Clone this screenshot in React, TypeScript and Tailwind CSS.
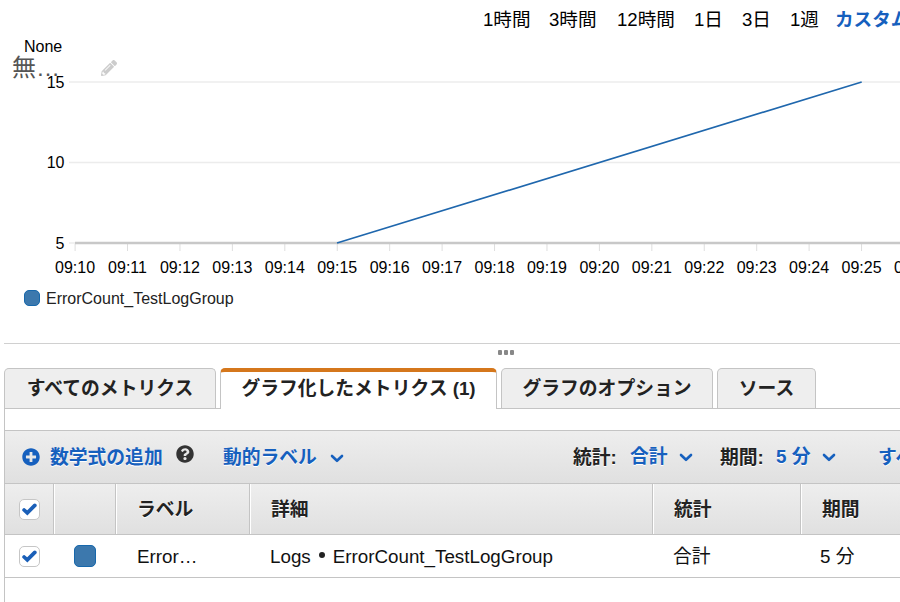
import clsx from "clsx";
import { FaPencilAlt, FaPlusCircle, FaQuestionCircle } from "react-icons/fa";

const ranges = [
  { label: "1時間", width: "w-[66px]" },
  { label: "3時間", width: "w-[68px]" },
  { label: "12時間", width: "w-[77px]" },
  { label: "1日", width: "w-[48px]" },
  { label: "3日", width: "w-[48px]" },
  { label: "1週", width: "w-[45px]" },
];

const tabs = [
  { label: "すべてのメトリクス", width: "w-[212px]" },
  { label: "グラフ化したメトリクス (1)", width: "w-[277px]", active: true },
  { label: "グラフのオプション", width: "w-[212px]" },
  { label: "ソース", width: "w-[99px]" },
];

const columns = [
  { label: "", width: "w-[62px]" },
  { label: "ラベル", width: "w-[134px]" },
  { label: "詳細", width: "w-[403px]" },
  { label: "統計", width: "w-[148px]" },
  { label: "期間", width: "w-[148px]" },
];

const ticks = Array.from({ length: 17 }, (_, i) => ({
  x: 75.1 + i * 52.43,
  label: `09:${10 + i}`,
}));

const gridLines = [
  { y: 42, label: "15" },
  { y: 122.5, label: "10" },
  { y: 203, label: "5" },
];

const Chevron = ({ className = "" }) => (
  <svg
    className={clsx("h-[9px] w-[14px]", className)}
    viewBox="0 0 14 9"
    fill="none"
    stroke="#1660be"
    strokeWidth="2.6"
    strokeLinecap="round"
    strokeLinejoin="round"
  >
    <path d="M2 2 7 6.8 12 2" />
  </svg>
);

const Checkbox = () => (
  <div className="flex h-[21px] w-[21px] items-center justify-center rounded-[5px] border border-[#c6c6c6] bg-white">
    <svg
      className="h-[13px] w-[15px]"
      viewBox="0 0 15 13"
      fill="none"
      stroke="#1a5fb8"
      strokeWidth="3.7"
      strokeLinecap="round"
    >
      <path d="M2.1 7 5.3 9.9 12.8 2.4" />
    </svg>
  </div>
);

const Chart = () => (
  <svg className="block h-[240px] w-[900px]" viewBox="0 0 900 240" fontSize="16">
    <text x="24" y="12">
      None
    </text>
    {gridLines.map(({ y, label }) => (
      <g key={label}>
        <line x1="69" x2="900" y1={y} y2={y} stroke="#ececec" strokeWidth="1.3" />
        <text x="64.5" y={y + 5.5} textAnchor="end">
          {label}
        </text>
      </g>
    ))}
    {ticks.map(({ x, label }) => (
      <g key={label}>
        <line x1={x} x2={x} y1="204" y2="211" stroke="#dedede" />
        <text x={x} y="233" textAnchor="middle">
          {label}
        </text>
      </g>
    ))}
    <line x1="75" x2="900" y1="203" y2="203" stroke="#c8c8c8" strokeWidth="2.6" />
    <path d="M337 203 861.7 42" fill="none" stroke="#1f67ad" strokeWidth="1.7" />
  </svg>
);

const MetricTabs = () => (
  <div className="flex h-[41px] gap-1 pl-1">
    <div className="absolute inset-x-0 bottom-0 ml-1 h-px bg-[#c4c4c4]" />
    {tabs.map(({ label, width, active }) => (
      <div
        key={label}
        className={clsx(
          "relative flex shrink-0 justify-center rounded-t-[5px] border-x border-[#c4c4c4] font-bold text-[#222]",
          width,
          active
            ? "h-[41px] border-t-4 border-t-[#d5771c] bg-white pt-[2px]"
            : "h-10 border-t bg-[#eee] pt-[5px]"
        )}
      >
        <span className="leading-[30px] whitespace-nowrap">{label}</span>
      </div>
    ))}
  </div>
);

const Toolbar = () => (
  <div className="flex h-[54px] items-center border-t border-b border-[#c4c4c4] bg-linear-to-b from-[#eee] to-[#e0e0e0] font-bold whitespace-nowrap text-[#1660be] text-shadow-[0_1px_0_#fff] *:shrink-0">
    <FaPlusCircle className="ml-[17px] h-[18px] w-[18px]" />
    <span className="mt-px ml-[10px] w-[114px]">数学式の追加</span>
    <FaQuestionCircle className="mb-[6px] ml-3 h-[18px] w-[18px] text-[#333]" />
    <span className="mt-px ml-[29px] w-[97px]">動的ラベル</span>
    <Chevron className="mt-[3px] ml-[10px]" />
    <span className="mt-px ml-[229px] w-[57px] text-[#222]">統計:</span>
    <span className="w-[39px]">合計</span>
    <Chevron className="ml-[10px]" />
    <span className="mt-px ml-[27px] w-[56px] text-[#222]">期間:</span>
    <span className="w-[36px]">5 分</span>
    <Chevron className="ml-[10px]" />
    <span className="mt-px ml-[42px]">すべて</span>
  </div>
);

const MetricsTable = () => (
  <>
    <div className="flex h-[51px] border-b border-[#c4c4c4] bg-linear-to-b from-[#eee] to-[#e0e0e0] text-shadow-[0_1px_0_#fff]">
      <div className="flex w-[49px] shrink-0 items-center border-r border-[#c4c4c4] pl-[14px]">
        <Checkbox />
      </div>
      {columns.map(({ label, width }) => (
        <div
          key={label}
          className={clsx(
            "flex shrink-0 items-center border-r border-l border-r-[#c4c4c4] border-l-white pt-[2px] pl-5 font-bold text-[#222]",
            width
          )}
        >
          {label}
        </div>
      ))}
    </div>
    <div className="flex h-[43px] items-center border-b border-[#c4c4c4] whitespace-nowrap text-[#111]">
      <div className="w-[49px] shrink-0 pl-[14px]">
        <Checkbox />
      </div>
      <div className="w-[62px] shrink-0 pl-5">
        <div className="h-[22px] w-[22px] rounded-[5px] border border-[#1768ac] bg-[#3c78ad]" />
      </div>
      <div className="w-[134px] shrink-0 pt-[2px] pl-[21px]">Error…</div>
      <div className="flex w-[403px] shrink-0 items-center pt-[2px] pl-5">
        Logs
        <span className="mr-[8px] mb-[4px] ml-[8px] h-[6px] w-[6px] rounded-full bg-[#222]" />
        ErrorCount_TestLogGroup
      </div>
      <div className="w-[148px] shrink-0 pt-[2px] pl-5">合計</div>
      <div className="w-[148px] shrink-0 pt-[2px] pl-[19px]">5 分</div>
    </div>
  </>
);

const App = () => (
  <div className="h-[602px] w-[900px] overflow-hidden bg-white font-['Liberation_Sans','Noto_Sans_CJK_JP',sans-serif] text-[18.8px] leading-7 text-black">
    <div className="flex h-10 items-center pl-[483px] text-[18.6px] whitespace-nowrap">
      {ranges.map(({ label, width }) => (
        <span key={label} className={clsx("shrink-0", width)}>
          {label}
        </span>
      ))}
      <span className="font-bold text-[#1660be]">カスタム</span>
    </div>

    <div className="relative">
      <Chart />
      <div className="absolute top-[13px] left-3 flex text-[24px] text-[#555]">
        <span className="w-[89px] leading-[30px]">無…</span>
        <FaPencilAlt className="mt-[7px] h-4 w-4 text-[#ccc]" />
      </div>
    </div>

    <div className="ml-1 flex h-16 items-start border-b border-[#d0d0d0] pt-[9px] pl-5 text-[16px]">
      <span className="mt-px h-4 w-4 rounded-[5px] border border-[#1768ac] bg-[#3c78ad]" />
      <span className="ml-[6px] leading-[19px] text-[#222]">ErrorCount_TestLogGroup</span>
    </div>
    <div className="flex h-6 gap-[2px] pt-[6px] pl-[498px]">
      <span className="h-[5px] w-[4px] rounded-[1px] bg-[#888]" />
      <span className="h-[5px] w-[4px] rounded-[1px] bg-[#888]" />
      <span className="h-[5px] w-[4px] rounded-[1px] bg-[#888]" />
    </div>

    <div className="relative">
      <MetricTabs />
    </div>
    <div className="ml-1 h-[193px] border-l border-[#c4c4c4] pt-[21px]">
      <Toolbar />
      <MetricsTable />
    </div>
  </div>
);

export default App;
